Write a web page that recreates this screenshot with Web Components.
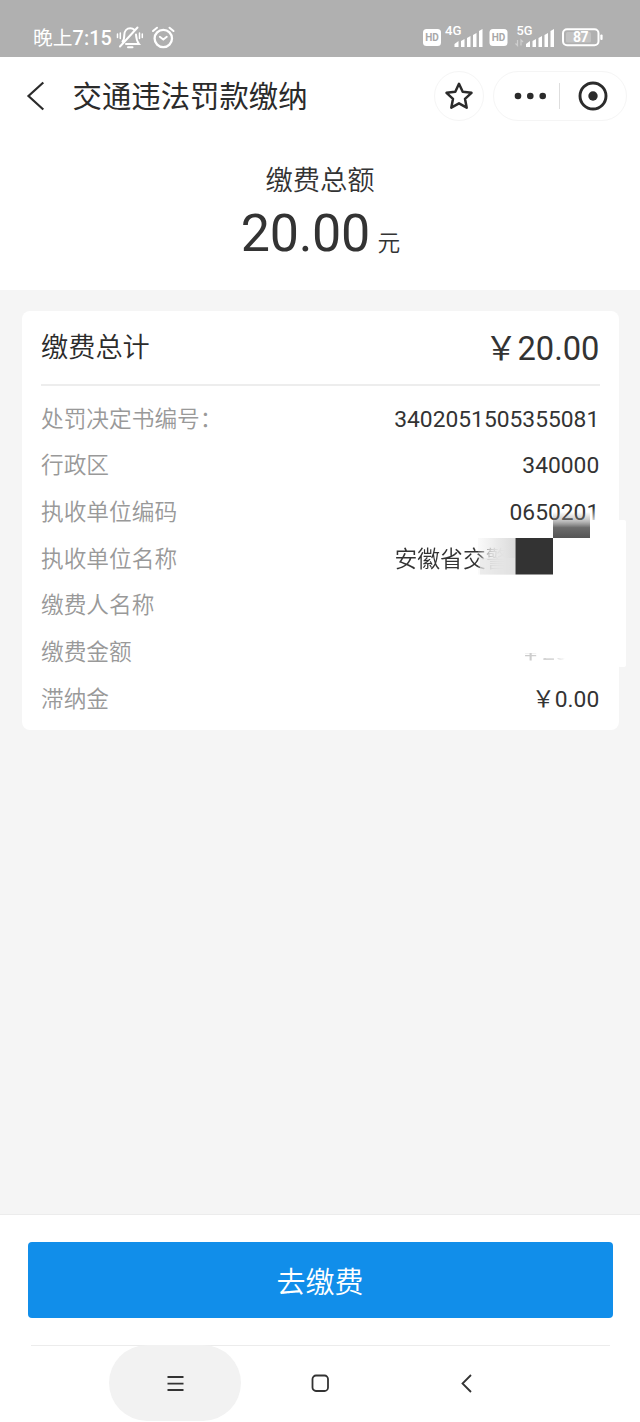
<!DOCTYPE html>
<html lang="zh-CN">
<head>
<meta charset="utf-8">
<title>交通违法罚款缴纳</title>
<style>
html,body{margin:0;padding:0}
body{width:640px;height:1422px;overflow:hidden;font-family:Roboto,"Noto Sans CJK SC",sans-serif;color:#333;background:#fff}
</style>
</head>
<body>
<payment-page></payment-page>
<script>
const define = (name, html) => customElements.define(name, class extends HTMLElement {
  constructor() {
    super();
    const t = document.createElement('template');
    t.innerHTML = html;
    this.attachShadow({ mode: 'open' }).append(t.content.cloneNode(true));
  }
});

define('status-bar', `<style>
:host{display:flex;height:57px;box-sizing:border-box;padding:19px 37px 0 33px;background:#b0b0b0;justify-content:space-between;color:#fff}
.left{display:flex;height:38px;align-items:center;font-size:19.800px;font-weight:400;line-height:38px}
.left span{padding-top:2px}.left b{font-weight:500;letter-spacing:.1px}
svg{display:block;flex:none}
text{font-family:Roboto,sans-serif}
</style>
<div class="left"><span>晚上<b>7:15</b></span>
<svg width="64" height="38" viewBox="115 19 64 38" fill="none" stroke="#fff" stroke-width="2" stroke-linecap="round" style="margin-left:3px">
<path d="M122.500 41.500c1.500-1.500 1.800-3 1.800-6.500 0-4 2.500-6.800 6-6.800 1.800 0 3 .6 4 1.600M136 34.500c.2 4 .3 6 3 9.500H126M120 46.500L137.500 27.500M128 47.300h4.500"/>
<path d="M117.500 34v3.500M120.300 33v5.500M139.500 33v5.500M142.300 34v3.500" stroke-width="1.500"/>
<circle cx="163.300" cy="38.500" r="8.700" stroke-width="2.300"/><path d="M159.800 36.800l3.500 2.700 3.500-2.700" stroke-width="1.900"/><path d="M153 31l4-3.300M173.500 31l-4-3.300"/>
</svg></div>
<svg width="182" height="38" viewBox="421 19 182 38" fill="#fff">
<rect x="423" y="29" width="18" height="17" rx="3.500"/><text x="425.200" y="41.200" font-size="10" font-weight="700" fill="#a8a8a8" textLength="13.600" lengthAdjust="spacingAndGlyphs">HD</text>
<text x="445" y="35.300" font-size="12.600" font-weight="500" textLength="16.500" lengthAdjust="spacingAndGlyphs">4G</text>
<path d="M454.500 47v-3l4-3v6zM461 47v-6l3.500-2v8zM467 47v-9l3.500-2v11zM473 47V35l3.500-2v14zM479 47V31l3.500-2v18z"/>
<rect x="489.500" y="29" width="18" height="17" rx="3.500"/><text x="491.700" y="41.200" font-size="10" font-weight="700" fill="#a8a8a8" textLength="13.600" lengthAdjust="spacingAndGlyphs">HD</text>
<text x="516.500" y="35.300" font-size="12.600" font-weight="500" textLength="16" lengthAdjust="spacingAndGlyphs">5G</text>
<path d="M517.500 40v5.500l-2-2M521 45.500V40l2 2" fill="none" stroke="#cfcfcf" stroke-width="1.200"/>
<path d="M526 47v-3l4-3v6zM532.500 47v-6l3.500-2v8zM538.500 47v-9l3.500-2v11zM544.500 47V35l3.500-2v14zM550.500 47V31l3.500-2v18z"/>
<rect x="563" y="29.200" width="35.500" height="16" rx="4" fill="none" stroke="#fff" stroke-width="2"/>
<rect x="566" y="32" width="25" height="10.500" rx="1.500" fill="#c2c2c2"/><rect x="600.300" y="34.500" width="2.300" height="5.500" rx="1"/>
<text x="573" y="42.300" font-size="14" font-weight="700" textLength="15.500">87</text>
</svg>`);

define('title-bar', `<style>
:host{display:flex;height:78px;align-items:center;box-sizing:border-box;padding:0 13px 0 26px}
svg{display:block;flex:none}
h1{margin:2px 0 0 26.500px;flex:1;font-size:29.400px;font-weight:400;line-height:40px;color:#2b2b2b}
.round{box-sizing:border-box;height:50px;border:1.500px solid #f5f5f5;border-radius:25px;display:flex;align-items:center;justify-content:center}
.star{width:50px;margin-right:9px}.pill{width:134px}
</style>
<svg width="20" height="32" viewBox="0 0 20 32" fill="none" stroke="#2b2b2b" stroke-width="2.200"><path d="M17.300 2.500L2.500 16l14.800 13.500"/></svg>
<h1><slot></slot></h1>
<div class="round star"><svg width="30" height="30" viewBox="0 0 30 30" fill="none" stroke="#2b2b2b" stroke-width="2.500" stroke-linejoin="round"><path d="M15 2.800l3.700 8 8.800 1-6.500 6 1.700 8.900-7.700-4.400-7.700 4.400 1.700-8.900-6.500-6 8.800-1z"/></svg></div>
<div class="round pill"><svg width="130" height="46" viewBox="0 0 130 46" fill="#2b2b2b"><circle cx="23" cy="23" r="3.300"/><circle cx="35.300" cy="23" r="3.300"/><circle cx="47.700" cy="23" r="3.300"/><path d="M64.500 10v26" stroke="#dedede" stroke-width="1"/><circle cx="98" cy="23" r="13" fill="none" stroke="#2b2b2b" stroke-width="2.900"/><circle cx="98" cy="23" r="4.700"/></svg></div>`);

define('amount-hero', `<style>
:host{display:flex;flex-direction:column;align-items:center;height:155px;box-sizing:border-box;padding-top:26px}
.label{font-size:27.300px;line-height:40px;font-weight:350}
.sum{display:flex;align-items:baseline;font-size:52px;line-height:66px;letter-spacing:-.3px;padding-left:1px}
small{font-size:22.700px;margin-left:7.500px;letter-spacing:0;font-weight:350}
</style>
<div class="label"><slot name="label"></slot></div>
<div class="sum"><slot></slot><small>元</small></div>`);

define('bill-row', `<style>
:host{display:flex;justify-content:space-between;align-items:center;height:46.700px;font-size:22.700px;line-height:34px;white-space:nowrap}
.label{color:#999;font-weight:350}.value{color:#333;font-size:22.800px;margin-right:.8px}
:host([partial=name]) .value{font-weight:350;margin-right:91.500px;-webkit-mask:linear-gradient(90deg,#000 74%,rgba(0,0,0,.4) 85%,transparent 97%);mask:linear-gradient(90deg,#000 74%,rgba(0,0,0,.4) 85%,transparent 97%)}
:host([partial=amount]) .value{-webkit-mask:linear-gradient(90deg,rgba(0,0,0,.28),rgba(0,0,0,.18) 45%,transparent 58%);mask:linear-gradient(90deg,rgba(0,0,0,.28),rgba(0,0,0,.18) 45%,transparent 58%);clip-path:polygon(0 17px,23px 17px,23px 22px,100% 22px,100% 100%,0 100%)}
</style><span class="label"><slot name="label"></slot></span><span class="value"><slot></slot></span>`);

define('mosaic-mark', `<style>
:host{position:absolute;left:456px;top:190px;width:150px;height:170px;pointer-events:none}
svg{display:block}
</style><svg width="150" height="170" viewBox="478 501 150 170"><defs>
<linearGradient id="a" x2="0" y2="1"><stop stop-color="#888" stop-opacity="0"/><stop offset=".35" stop-color="#888" stop-opacity=".55"/><stop offset=".6" stop-color="#6c6c6c"/><stop offset="1" stop-color="#555"/></linearGradient>
<linearGradient id="b"><stop stop-color="#e6e6e6" stop-opacity=".2"/><stop offset=".5" stop-color="#e3e3e3" stop-opacity=".75"/><stop offset="1" stop-color="#dadada"/></linearGradient>
<linearGradient id="c" x2="0" y2="1"><stop stop-color="#fff" stop-opacity="0"/><stop offset="1" stop-color="#fff"/></linearGradient></defs>
<rect x="590" y="508" width="12" height="16" fill="url(#c)"/>
<rect x="618" y="520" width="8" height="147" rx="2" fill="#fff"/>
<rect x="553" y="512" width="37" height="26" fill="url(#a)"/>
<rect x="478" y="538" width="37.500" height="36.500" fill="url(#b)"/>
<rect x="480" y="558" width="35.500" height="16.500" fill="#e4e4e4" opacity=".6"/>
<rect x="515.500" y="538" width="37.500" height="36.500" fill="#333"/></svg>`);

define('bill-card', `<style>
:host{display:block;position:relative;box-sizing:border-box;width:597px;height:419px;margin:21px 0 0 22px;padding:0 19px;border-radius:8px;background:#fff}
.head{display:flex;align-items:center;justify-content:space-between;height:73px;border-bottom:2px solid #ededed;margin-bottom:10.300px}
.head b{font-weight:350;font-size:27.200px;line-height:38px;color:#2b2b2b;padding-top:1px}
.head span{font-size:32.700px;line-height:38px;color:#333;padding-top:2px;margin-right:.5px}
</style>
<div class="head"><b>缴费总计</b><span>￥20.00</span></div>
<slot></slot><mosaic-mark></mosaic-mark>`);

define('pay-footer', `<style>
:host{display:flex;flex-direction:column;align-items:center;height:132px;box-sizing:border-box;border-top:1px solid #ececec;padding-top:27px;background:#fff}
button{flex:none;width:585px;height:76px;border:0;padding:7px 0 0;border-radius:4px;background:#118eea;color:#fff;font:350 29px/69px Roboto,"Noto Sans CJK SC",sans-serif}
hr{flex:none;width:579px;height:1px;border:0;margin:27px 0 0;background:#ececec}
</style><button><slot></slot></button><hr>`);

define('system-nav', `<style>
:host{display:flex;height:77px;margin-top:-1px;padding-left:109px}
div{height:76px;display:flex;align-items:center;justify-content:center}
.on{width:132px;border-radius:38px;background:#f2f2f2}.home{width:158px}.back{width:136px}
svg{display:block;fill:none;stroke:#333;stroke-width:1.800}
</style>
<div class="on"><svg width="20" height="20"><path d="M2.500 4h16M2.500 10.600h16M2.500 17h16"/></svg></div>
<div class="home"><svg width="20" height="20"><rect x="2.500" y="2.500" width="15.500" height="15.500" rx="3.500"/></svg></div>
<div class="back"><svg width="20" height="20"><path d="M14 2L5.500 10.500l8.500 8.500"/></svg></div>`);

define('payment-page', `<style>
:host{display:flex;flex-direction:column;width:640px;height:1422px;overflow:hidden}
main{height:924px;background:#f5f5f5;overflow:hidden}
status-bar,title-bar,amount-hero,main,pay-footer,system-nav{flex:none}
</style>
<status-bar></status-bar>
<title-bar>交通违法罚款缴纳</title-bar>
<amount-hero><span slot="label">缴费总额</span>20.00</amount-hero>
<main><bill-card>
<bill-row><span slot="label">处罚决定书编号：</span>3402051505355081</bill-row>
<bill-row><span slot="label">行政区</span>340000</bill-row>
<bill-row><span slot="label">执收单位编码</span>0650201</bill-row>
<bill-row partial="name"><span slot="label">执收单位名称</span>安徽省交警</bill-row>
<bill-row><span slot="label">缴费人名称</span></bill-row>
<bill-row partial="amount"><span slot="label">缴费金额</span>￥20.00</bill-row>
<bill-row><span slot="label">滞纳金</span>￥0.00</bill-row>
</bill-card></main>
<pay-footer>去缴费</pay-footer>
<system-nav></system-nav>`);
</script>
</body>
</html>
